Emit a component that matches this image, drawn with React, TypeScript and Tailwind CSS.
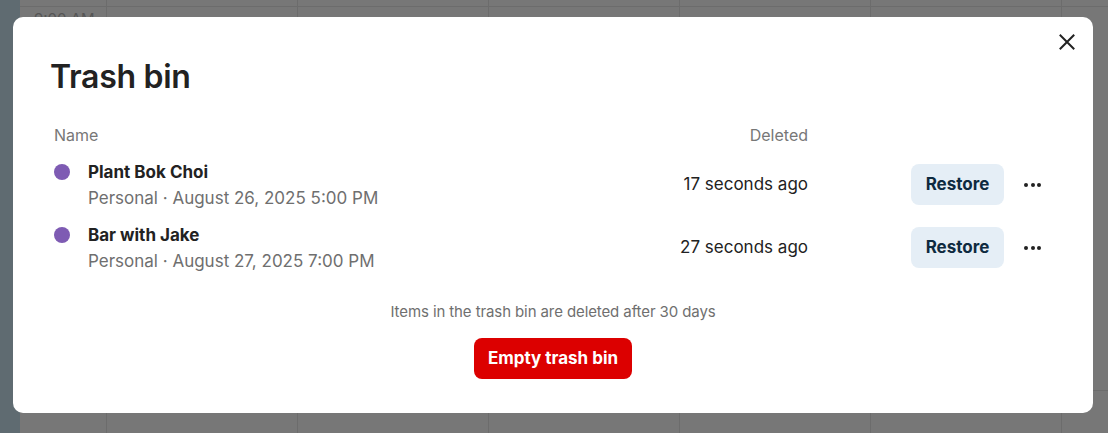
import React from "react";

const rows = [
  { name: "Plant Bok Choi", sub: "Personal · August 26, 2025 5:00 PM", ago: "17 seconds ago" },
  { name: "Bar with Jake", sub: "Personal · August 27, 2025 7:00 PM", ago: "27 seconds ago" },
];

export default function App() {
  return (
    <div
      className="relative w-[1108px] h-[433px] overflow-hidden bg-[#777777]"
      style={{ fontFamily: "Inter, 'Noto Sans', sans-serif" }}
    >
      {/* background calendar (dimmed) */}
      <div className="flex h-full">
        <div className="w-[20px] shrink-0 h-full bg-[#5f6b71]" />
        <div className="w-[87px] shrink-0 h-full border-r border-[#6c6c6c] flex flex-col">
          <div className="h-[7px] border-b border-[#6c6c6c]" />
          <div className="pl-[14px] pt-[4px] text-[15px] text-[#555] leading-none">9:00 AM</div>
        </div>
        {[0, 1, 2, 3, 4].map((i) => (
          <div key={i} className="w-[191px] shrink-0 h-full border-r border-[#6c6c6c] flex flex-col">
            <div className="h-[7px] border-b border-[#6c6c6c]" />
            <div className="h-[384px] border-b border-[#6c6c6c]" />
          </div>
        ))}
        <div className="flex-1 h-full flex flex-col">
          <div className="h-[7px] border-b border-[#6c6c6c]" />
          <div className="h-[384px] border-b border-[#6c6c6c]" />
        </div>
      </div>

      {/* modal */}
      <div className="absolute left-[13px] top-[17px] w-[1080px] h-[396px] bg-white rounded-[10px] px-[37px] pt-[40px]">
        <button className="absolute right-[14px] top-[13px] w-[24px] h-[24px] flex items-center justify-center text-[#222]">
          <svg width="16" height="16" viewBox="0 0 16 16" fill="none" stroke="currentColor" strokeWidth="2" strokeLinecap="square">
            <path d="M1.5 1.5L14.5 14.5M14.5 1.5L1.5 14.5" />
          </svg>
        </button>

        <h1 className="text-[32px] leading-[40px] font-semibold text-[#222] tracking-[-0.3px]">Trash bin</h1>

        <div className="mt-[26px] pl-[4px]">
          <div className="flex items-center h-[24px] text-[16px] text-[#777]">
            <div className="flex-1">Name</div>
            <div className="w-[219px] text-right">Deleted</div>
            <div className="w-[248px]" />
          </div>

          <div className="mt-[6px] flex flex-col">
            {rows.map((r) => (
              <div key={r.name} className="flex items-center h-[63px]">
                <div className="flex-1 flex items-start">
                  <div className="w-[16px] h-[16px] rounded-full bg-[#7e5bb3] mt-[4px]" />
                  <div className="ml-[18px]">
                    <div className="text-[17px] leading-[24px] font-bold text-[#222]">{r.name}</div>
                    <div className="text-[17px] leading-[24px] text-[#6f6f6f] mt-[2px]">{r.sub}</div>
                  </div>
                </div>
                <div className="w-[219px] text-right text-[17px] text-[#222]">{r.ago}</div>
                <div className="w-[248px] flex items-center pl-[103px]">
                  <button className="h-[41px] w-[93px] rounded-[8px] bg-[#e5eef6] text-[17px] font-bold text-[#0e2a40]">
                    Restore
                  </button>
                  <div className="ml-[20px] flex gap-[2.5px]">
                    <span className="w-[4px] h-[4px] rounded-full bg-[#222]" />
                    <span className="w-[4px] h-[4px] rounded-full bg-[#222]" />
                    <span className="w-[4px] h-[4px] rounded-full bg-[#222]" />
                  </div>
                </div>
              </div>
            ))}
          </div>
        </div>

        <div className="mt-[23px] flex flex-col items-center">
          <div className="text-[15px] leading-[20px] text-[#6f6f6f] tracking-[-0.1px]">Items in the trash bin are deleted after 30 days</div>
          <button className="mt-[16px] h-[41px] px-[14px] rounded-[8px] bg-[#dc0000] text-white text-[17px] font-bold">
            Empty trash bin
          </button>
        </div>
      </div>
    </div>
  );
}
